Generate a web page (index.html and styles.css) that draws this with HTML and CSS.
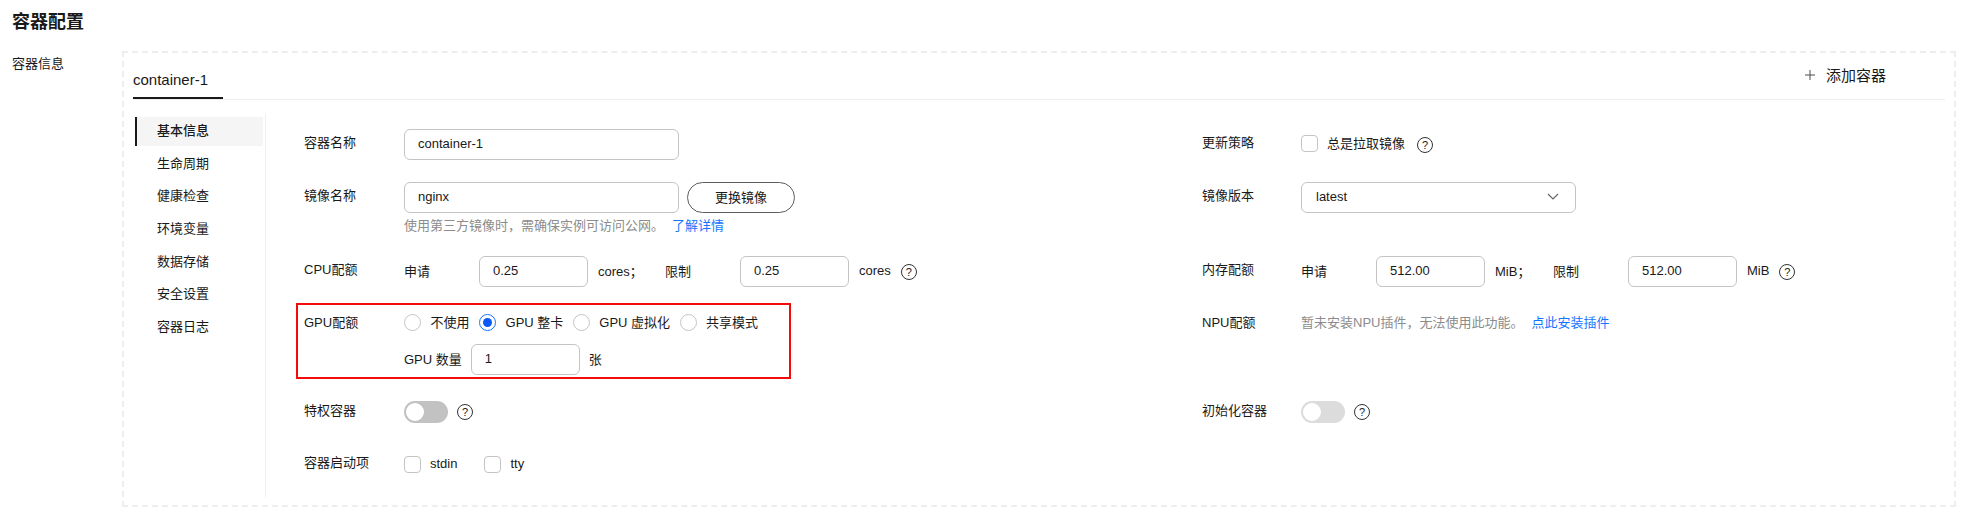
FILE: index.html
```html
<!DOCTYPE html>
<html lang="zh-CN">
<head>
    <meta charset="UTF-8">
    <meta name="viewport" content="width=device-width, initial-scale=1.0">
    <title>容器配置</title>
    <link rel="stylesheet" href="styles.css">
</head>
<body>
    <h2 class="page-title">容器配置</h2>
    <div class="section">
        <div class="section-label">容器信息</div>
        <div class="container-box">
            <div class="tabs">
                <div class="tab">container-1</div>
                <div class="add-container">
                    <svg class="add-icon" width="10" height="10" viewBox="0 0 10 10"><path d="M5 0v10M0 5h10" stroke="#4d4d4d" stroke-width="1" fill="none"/></svg>
                    <span>添加容器</span>
                </div>
            </div>
            <div class="tab-body">
                <ul class="side-nav">
                    <li class="active">基本信息</li>
                    <li>生命周期</li>
                    <li>健康检查</li>
                    <li>环境变量</li>
                    <li>数据存储</li>
                    <li>安全设置</li>
                    <li>容器日志</li>
                </ul>
                <div class="content">
                    <div class="form">
                        <div class="gpu-mark"></div>

                        <div class="label">容器名称</div>
                        <div class="field">
                            <input class="input input-name" type="text" value="container-1">
                        </div>
                        <div class="label">更新策略</div>
                        <div class="field field-update">
                            <span class="checkbox"></span>
                            <span class="check-text">总是拉取镜像</span>
                            <span class="help help-update">?</span>
                        </div>

                        <div class="label">镜像名称</div>
                        <div>
                            <div class="field">
                                <input class="input input-name" type="text" value="nginx">
                                <button class="btn-round">更换镜像</button>
                            </div>
                            <div class="hint">使用第三方镜像时，需确保实例可访问公网。<a class="link" href="#">了解详情</a></div>
                        </div>
                        <div class="label">镜像版本</div>
                        <div class="field">
                            <div class="select">
                                <span>latest</span>
                                <svg width="12" height="7" viewBox="0 0 12 7"><path d="M1 1l5 5 5-5" stroke="#666" stroke-width="1.2" fill="none"/></svg>
                            </div>
                        </div>

                        <div class="label">CPU配额</div>
                        <div class="field">
                            <span class="qty-label">申请</span>
                            <input class="input input-qty" type="text" value="0.25">
                            <span class="unit unit-cpu">cores；</span>
                            <span class="qty-label">限制</span>
                            <input class="input input-qty" type="text" value="0.25">
                            <span class="unit">cores</span>
                            <span class="help help-cpu">?</span>
                        </div>
                        <div class="label">内存配额</div>
                        <div class="field">
                            <span class="qty-label">申请</span>
                            <input class="input input-qty" type="text" value="512.00">
                            <span class="unit unit-mem">MiB；</span>
                            <span class="qty-label">限制</span>
                            <input class="input input-qty" type="text" value="512.00">
                            <span class="unit">MiB</span>
                            <span class="help help-mem">?</span>
                        </div>

                        <div class="label">GPU配额</div>
                        <div class="gpu-field">
                            <div class="radios">
                                <span class="radio"></span><span class="radio-text">不使用</span>
                                <span class="radio checked"></span><span class="radio-text">GPU 整卡</span>
                                <span class="radio"></span><span class="radio-text">GPU 虚拟化</span>
                                <span class="radio"></span><span class="radio-text">共享模式</span>
                            </div>
                            <div class="field gpu-count">
                                <span class="count-text">GPU 数量</span>
                                <input class="input input-count" type="text" value="1">
                                <span class="count-text">张</span>
                            </div>
                        </div>
                        <div class="label">NPU配额</div>
                        <div class="npu-text">暂未安装NPU插件，无法使用此功能。<a class="link" href="#">点此安装插件</a></div>

                        <div class="label label-switch">特权容器</div>
                        <div class="switch-field">
                            <span class="switch"></span>
                            <span class="help">?</span>
                        </div>
                        <div class="label label-switch">初始化容器</div>
                        <div class="switch-field">
                            <span class="switch switch-off"></span>
                            <span class="help">?</span>
                        </div>

                        <div class="label label-check">容器启动项</div>
                        <div class="field-options">
                            <span class="checkbox"></span><span class="check-text">stdin</span>
                            <span class="checkbox checkbox-next"></span><span class="check-text">tty</span>
                        </div>
                    </div>
                </div>
            </div>
        </div>
    </div>
</body>
</html>
```

FILE: styles.css
```css
* {
    box-sizing: border-box;
}
body {
    height: 520px;
    margin: 0;
    padding: 10px 21px 0 12px;
    overflow: hidden;
    font-family: "Liberation Sans", "Noto Sans CJK SC", sans-serif;
    font-size: 13px;
    color: #191919;
    background: #fff;
}
.page-title {
    margin: 0 0 17px;
    font-size: 18px;
    line-height: 24px;
    font-weight: bold;
}
.section {
    display: flex;
}
.section-label {
    width: 110px;
    padding-top: 4px;
    line-height: 18px;
}
.container-box {
    flex: 1;
    padding: 0 9px 8px;
    border: 2px dashed #eeeeee;
}
.tabs {
    display: flex;
    border-bottom: 1px solid #eeeeee;
}
.tab {
    width: 90px;
    padding: 17px 0 7px;
    font-size: 15px;
    line-height: 20px;
    border-bottom: 2px solid #191919;
}
.add-container {
    display: flex;
    align-items: center;
    gap: 11px;
    margin-left: auto;
    margin-right: 59px;
    padding-bottom: 3px;
    font-size: 15px;
}
.tab-body {
    display: flex;
}
.side-nav {
    width: 132px;
    margin: 17px 0 0;
    padding: 0 2px 0 2px;
    list-style: none;
}
.side-nav li {
    height: 29px;
    margin-bottom: 3.7px;
    padding-left: 22px;
    line-height: 27px;
}
.side-nav .active {
    padding-left: 20px;
    background: #f5f5f5;
    border-left: 2px solid #191919;
    font-weight: 500;
}
.content {
    flex: 1;
    height: 384px;
    margin-top: 13px;
    padding: 16px 0 0 38px;
    border-left: 1px solid #eeeeee;
}
.form {
    position: relative;
    display: grid;
    grid-template-columns: 100px 798px 99px 1fr;
    grid-template-rows: 31px 52px 31px 70px 32px 18px;
    row-gap: 22px;
    align-items: start;
}
/* red annotation drawn over the GPU row */
.gpu-mark {
    position: absolute;
    left: -8px;
    top: 174px;
    width: 495px;
    height: 76px;
    border: 2px solid #f60b0b;
}
.label {
    line-height: 28px;
}
.label-switch {
    line-height: 20px;
}
.label-check {
    line-height: 16px;
}
.field {
    display: flex;
    align-items: center;
    min-height: 31px;
}
.field-update {
    min-height: 28px;
}
.input {
    height: 31px;
    padding: 0 13px 2px;
    border: 1px solid #c4c4c4;
    border-radius: 6px;
    font: inherit;
    color: #191919;
    outline: none;
}
.input-name {
    width: 275px;
}
.input-qty,
.input-count {
    width: 109px;
}
.btn-round {
    width: 108px;
    height: 31px;
    margin-left: 8px;
    padding: 0 0 2px;
    background: #fff;
    border: 1px solid #5c5c5c;
    border-radius: 16px;
    font: inherit;
    color: #191919;
}
.hint {
    margin-top: 3px;
    line-height: 20px;
    color: #8c8c8c;
}
.link {
    margin-left: 8px;
    color: #1476ff;
    text-decoration: none;
}
.select {
    display: flex;
    align-items: center;
    justify-content: space-between;
    width: 275px;
    height: 31px;
    padding: 0 16px 2px 14px;
    border: 1px solid #c4c4c4;
    border-radius: 6px;
}
.qty-label,
.unit,
.count-text,
.check-text,
.radio-text {
    padding-bottom: 2px;
}
.qty-label {
    width: 75px;
}
.unit {
    margin-left: 10px;
}
.unit-cpu {
    width: 67px;
}
.unit-mem {
    width: 58px;
}
.help {
    display: inline-block;
    width: 16px;
    height: 16px;
    margin-left: 9px;
    border: 1px solid #333;
    border-radius: 50%;
    font-size: 11px;
    line-height: 14px;
    text-align: center;
}
.help-update {
    margin: 4px 0 0 12px;
}
.help-cpu {
    margin-left: 10px;
}
.help-mem {
    margin-left: 10px;
}
.checkbox {
    display: inline-block;
    flex: none;
    width: 17px;
    height: 17px;
    border: 1px solid #c4c4c4;
    border-radius: 4px;
}
.check-text {
    margin-left: 9px;
}
.checkbox-next {
    margin-left: 27px;
}
.gpu-field {
    padding-bottom: 4px;
}
.radios {
    display: flex;
    align-items: center;
    height: 26px;
}
.radio {
    position: relative;
    width: 17px;
    height: 17px;
    border: 1px solid #c4c4c4;
    border-radius: 50%;
}
.radio.checked {
    border-color: #1476ff;
}
.radio.checked::after {
    content: "";
    position: absolute;
    left: 3px;
    top: 3px;
    width: 9px;
    height: 9px;
    background: #0a59f7;
    border-radius: 50%;
}
.radio-text {
    margin: 0 9.5px;
}
.gpu-count {
    gap: 9px;
    margin-top: 9px;
}
.npu-text {
    line-height: 28px;
    color: #8c8c8c;
}
.switch-field {
    display: flex;
    align-items: center;
    height: 22px;
}
.switch {
    position: relative;
    display: inline-block;
    width: 44px;
    height: 22px;
    background: #c2c2c2;
    border-radius: 11px;
}
.switch::after {
    content: "";
    position: absolute;
    left: 2px;
    top: 2px;
    width: 18px;
    height: 18px;
    background: #fff;
    border-radius: 50%;
}
.switch-off {
    background: #dcdcdc;
}
.field-options {
    display: flex;
    align-items: center;
    height: 18px;
}
```
